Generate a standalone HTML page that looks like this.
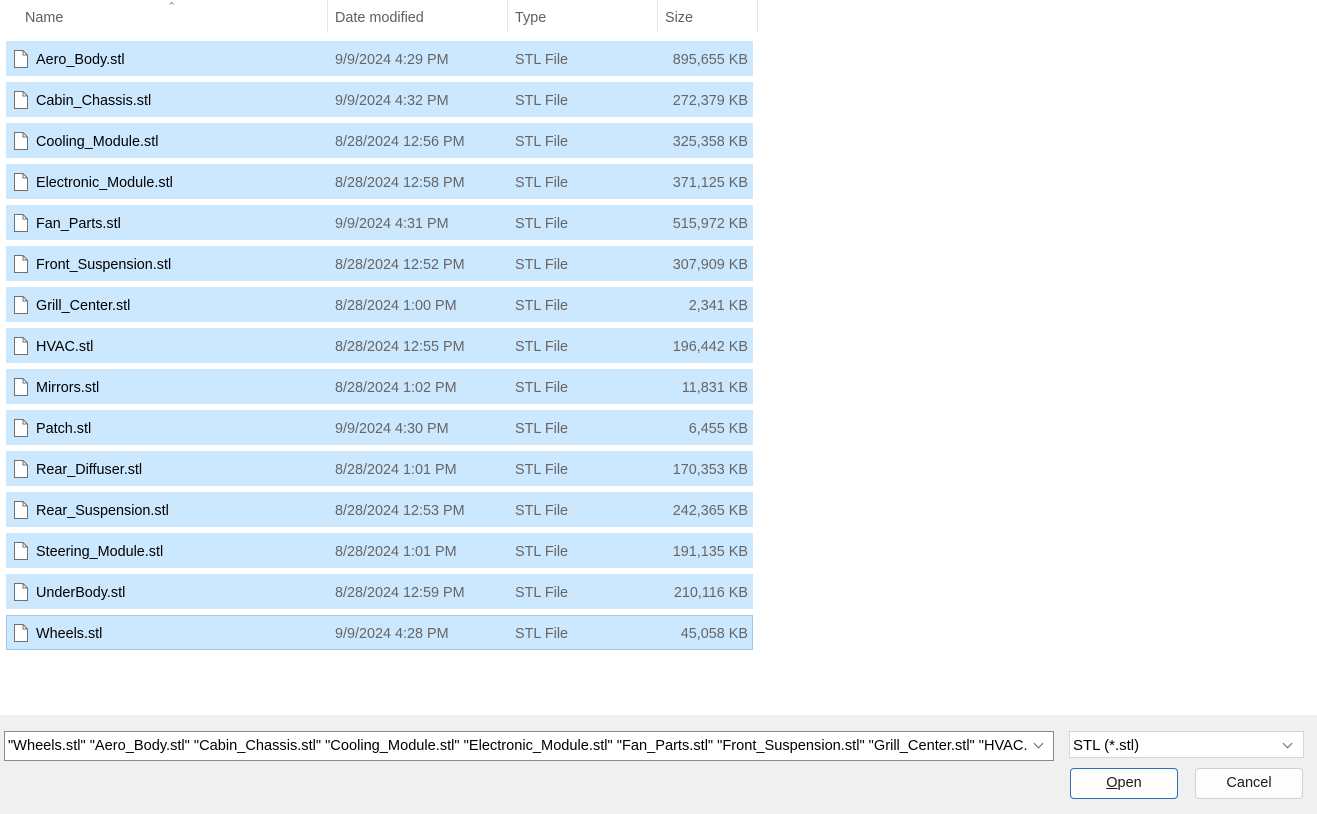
<!DOCTYPE html><html><head><style>
body{margin:0;width:1317px;height:814px;background:#fff;font-family:"Liberation Sans",sans-serif;font-size:14.4px;color:#1a1a1a;position:relative;overflow:hidden}
.h{position:absolute;top:10px;color:#5f5f5f;font-size:14.4px}
.sep{position:absolute;top:0;width:1px;height:33px;background:#e5e5e5}
.r{position:absolute;left:6px;width:747px;height:35px;background:#cce8ff}
.r span{position:absolute;top:11px}
.n{left:30px;color:#000}
.d{left:329px;color:#666}
.t{left:509px;color:#666}
.s{right:5px;color:#666}
.ic{position:absolute;left:7px;top:8px}
.bot{position:absolute;left:0;top:715px;width:1317px;height:99px;background:#f0f0f0}
.box{position:absolute;background:#fff;border:1px solid #8a8a8a;box-sizing:border-box}
.btn{position:absolute;background:#fdfdfd;border:1px solid #d0d0d0;border-radius:4px;box-sizing:border-box;text-align:center;line-height:29px;font-size:14.5px}
.chev{position:absolute;width:6px;height:6px;border-right:1px solid #666;border-bottom:1px solid #666;transform:rotate(45deg)}
</style></head><body>
<div class="h" style="left:25px">Name</div>
<div style="position:absolute;left:167px;top:0;color:#888;font-size:11px">&#8963;</div>
<div class="sep" style="left:327px"></div><div class="h" style="left:335px">Date modified</div>
<div class="sep" style="left:507px"></div><div class="h" style="left:515px">Type</div>
<div class="sep" style="left:657px"></div><div class="h" style="left:665px">Size</div>
<div class="sep" style="left:757px"></div>
<div id="rows"></div>
<script>
var d=[["Aero_Body.stl","9/9/2024 4:29 PM","895,655 KB"],["Cabin_Chassis.stl","9/9/2024 4:32 PM","272,379 KB"],["Cooling_Module.stl","8/28/2024 12:56 PM","325,358 KB"],["Electronic_Module.stl","8/28/2024 12:58 PM","371,125 KB"],["Fan_Parts.stl","9/9/2024 4:31 PM","515,972 KB"],["Front_Suspension.stl","8/28/2024 12:52 PM","307,909 KB"],["Grill_Center.stl","8/28/2024 1:00 PM","2,341 KB"],["HVAC.stl","8/28/2024 12:55 PM","196,442 KB"],["Mirrors.stl","8/28/2024 1:02 PM","11,831 KB"],["Patch.stl","9/9/2024 4:30 PM","6,455 KB"],["Rear_Diffuser.stl","8/28/2024 1:01 PM","170,353 KB"],["Rear_Suspension.stl","8/28/2024 12:53 PM","242,365 KB"],["Steering_Module.stl","8/28/2024 1:01 PM","191,135 KB"],["UnderBody.stl","8/28/2024 12:59 PM","210,116 KB"],["Wheels.stl","9/9/2024 4:28 PM","45,058 KB"]];
var h="";d.forEach(function(r,i){var last=i==14?"box-shadow:inset 0 0 0 1px #99c9ef;":"";
h+='<div class="r" style="top:'+(41+i*41)+'px;'+last+'"><svg class="ic" width="16" height="20" viewBox="0 0 16 20"><path d="M1.5 1.5H10L14.5 6V18.5H1.5Z" fill="#fff" stroke="#707070"/><path d="M10 1.5V6H14.5" fill="none" stroke="#707070"/></svg><span class="n">'+r[0]+'</span><span class="d">'+r[1]+'</span><span class="t">STL File</span><span class="s">'+r[2]+'</span></div>';});
document.getElementById("rows").innerHTML=h;
</script>
<div class="bot"></div>
<div class="box" style="left:4px;top:731px;width:1050px;height:30px;overflow:hidden;white-space:nowrap;padding:6px 0 0 3px;color:#000;font-size:14.6px">"Wheels.stl" "Aero_Body.stl" "Cabin_Chassis.stl" "Cooling_Module.stl" "Electronic_Module.stl" "Fan_Parts.stl" "Front_Suspension.stl" "Grill_Center.stl" "HVAC.st<span style="position:absolute;right:0;top:0;width:26px;height:28px;background:#fff"><span class="chev" style="left:8px;top:8px"></span></span></div>
<div class="box" style="left:1069px;top:731px;width:235px;height:27px;border-color:#d5d5d5;padding:5px 0 0 3px;color:#000;font-size:15px">STL (*.stl)<span class="chev" style="right:12px;top:8px"></span></div>
<div class="btn" style="left:1070px;top:768px;width:108px;height:31px;border-color:#2e6fb0"><u>O</u>pen</div>
<div class="btn" style="left:1195px;top:768px;width:108px;height:31px">Cancel</div>
</body></html>
